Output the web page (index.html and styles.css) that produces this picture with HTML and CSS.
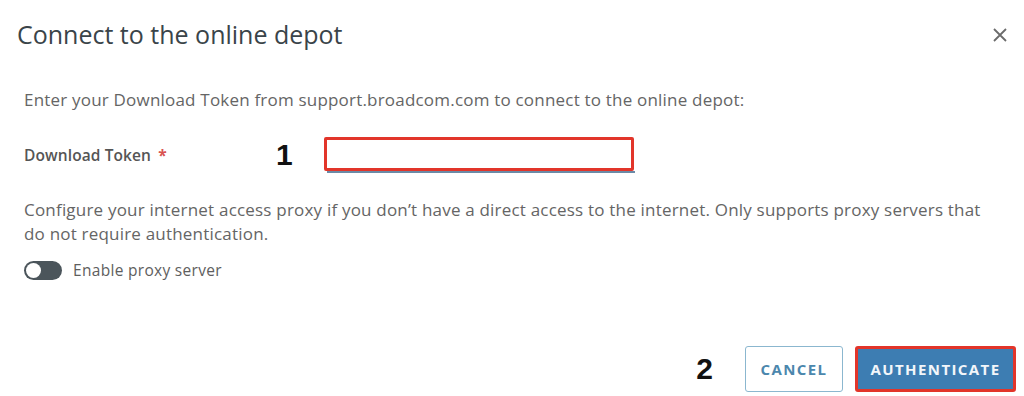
FILE: index.html
```html
<!DOCTYPE html>
<html>
<head>
<meta charset="utf-8">
<link rel="stylesheet" href="styles.css">
</head>
<body>
<div class="dialog">
  <div class="header">
    <h1 class="title">Connect to the online depot</h1>
    <button class="close" aria-label="Close">
      <svg width="16" height="16" viewBox="0 0 16 16"><path d="M2 2 L14 14 M14 2 L2 14" stroke="#6b6b6b" stroke-width="1.8" fill="none"/></svg>
    </button>
  </div>
  <p class="intro">Enter your Download Token from support.broadcom.com to connect to the online depot:</p>
  <div class="field">
    <label class="label">Download Token <span class="req">*</span></label>
    <span class="step step1">1</span>
    <div class="input-wrap">
      <div class="input"></div>
      <div class="underline"></div>
    </div>
  </div>
  <p class="proxy-text">Configure your internet access proxy if you don’t have a direct access to the internet. Only supports proxy servers that do not require authentication.</p>
  <div class="toggle-row">
    <span class="toggle"><span class="knob"></span></span>
    <span class="toggle-label">Enable proxy server</span>
  </div>
  <div class="footer">
    <span class="step step2">2</span>
    <button class="btn btn-outline">CANCEL</button>
    <button class="btn btn-primary">AUTHENTICATE</button>
  </div>
</div>
</body>
</html>
```
FILE: styles.css
```css
* { box-sizing: border-box; }
html, body { margin: 0; padding: 0; background: #fff; }
body { width: 1024px; height: 396px; overflow: hidden; font-family: "Open Sans", "Noto Sans", sans-serif; }
.dialog { padding: 0 10px 0 24px; display: flex; flex-direction: column; height: 396px; }
.header { display: flex; justify-content: space-between; align-items: center; margin-left: -7px; padding-top: 16px; height: 52px; }
.title { margin: 0; font-size: 25px; font-weight: 400; color: #3a4449; letter-spacing: 0; }
.close { border: 0; background: none; padding: 0; margin-right: 6px; margin-top: 2px; width: 16px; height: 16px; display: flex; }
.intro { margin: 37px 0 0; font-size: 17px; letter-spacing: 0.2px; color: #656565; line-height: 22px; }
.field { display: flex; align-items: center; margin-top: 24px; height: 40px; }
.label { font-size: 15.5px; font-weight: 600; color: #555; width: 252px; letter-spacing: 0.1px; }
.req { color: #d9534f; font-weight: 700; margin-left: 3px; }
.step { font-family: "Liberation Sans", Arial, sans-serif; font-weight: 700; font-size: 30px; color: #111; }
.step1 { width: 48px; }
.input-wrap { position: relative; width: 312px; height: 36px; }
.input { width: 310px; height: 34px; border: 3px solid #e2352a; border-radius: 2px; }
.underline { height: 2px; background: #6b8aa6; margin-left: 3px; width: 308px; }
.proxy-text { margin: 23px 0 0; max-width: 972px; font-size: 17px; letter-spacing: 0.2px; color: #656565; line-height: 24px; }
.toggle-row { display: flex; align-items: center; margin-top: 13px; }
.toggle { width: 38px; height: 19px; border-radius: 10px; background: #4b555b; position: relative; display: inline-block; flex: none; }
.knob { position: absolute; left: 2px; top: 2px; width: 15px; height: 15px; border-radius: 50%; background: #fff; }
.toggle-label { margin-left: 11px; font-size: 15.5px; color: #5e5e5e; letter-spacing: 0.3px; }
.footer { display: flex; justify-content: flex-end; align-items: center; margin-top: auto; margin-bottom: 4px; margin-right: -2px; }
.step2 { margin-right: 32px; }
.btn { font-family: "Open Sans", "Noto Sans", sans-serif; font-weight: 700; font-size: 15px; letter-spacing: 1.4px; height: 46px; border-radius: 3px; cursor: pointer; padding: 0; }
.btn-outline { width: 98px; background: #fff; border: 1.5px solid #8bb7cf; color: #4b87ad; margin-right: 12px; }
.btn-primary { width: 161px; background: #3d7db2; border: 3px solid #e2352a; color: #f2f6fa; }
```
